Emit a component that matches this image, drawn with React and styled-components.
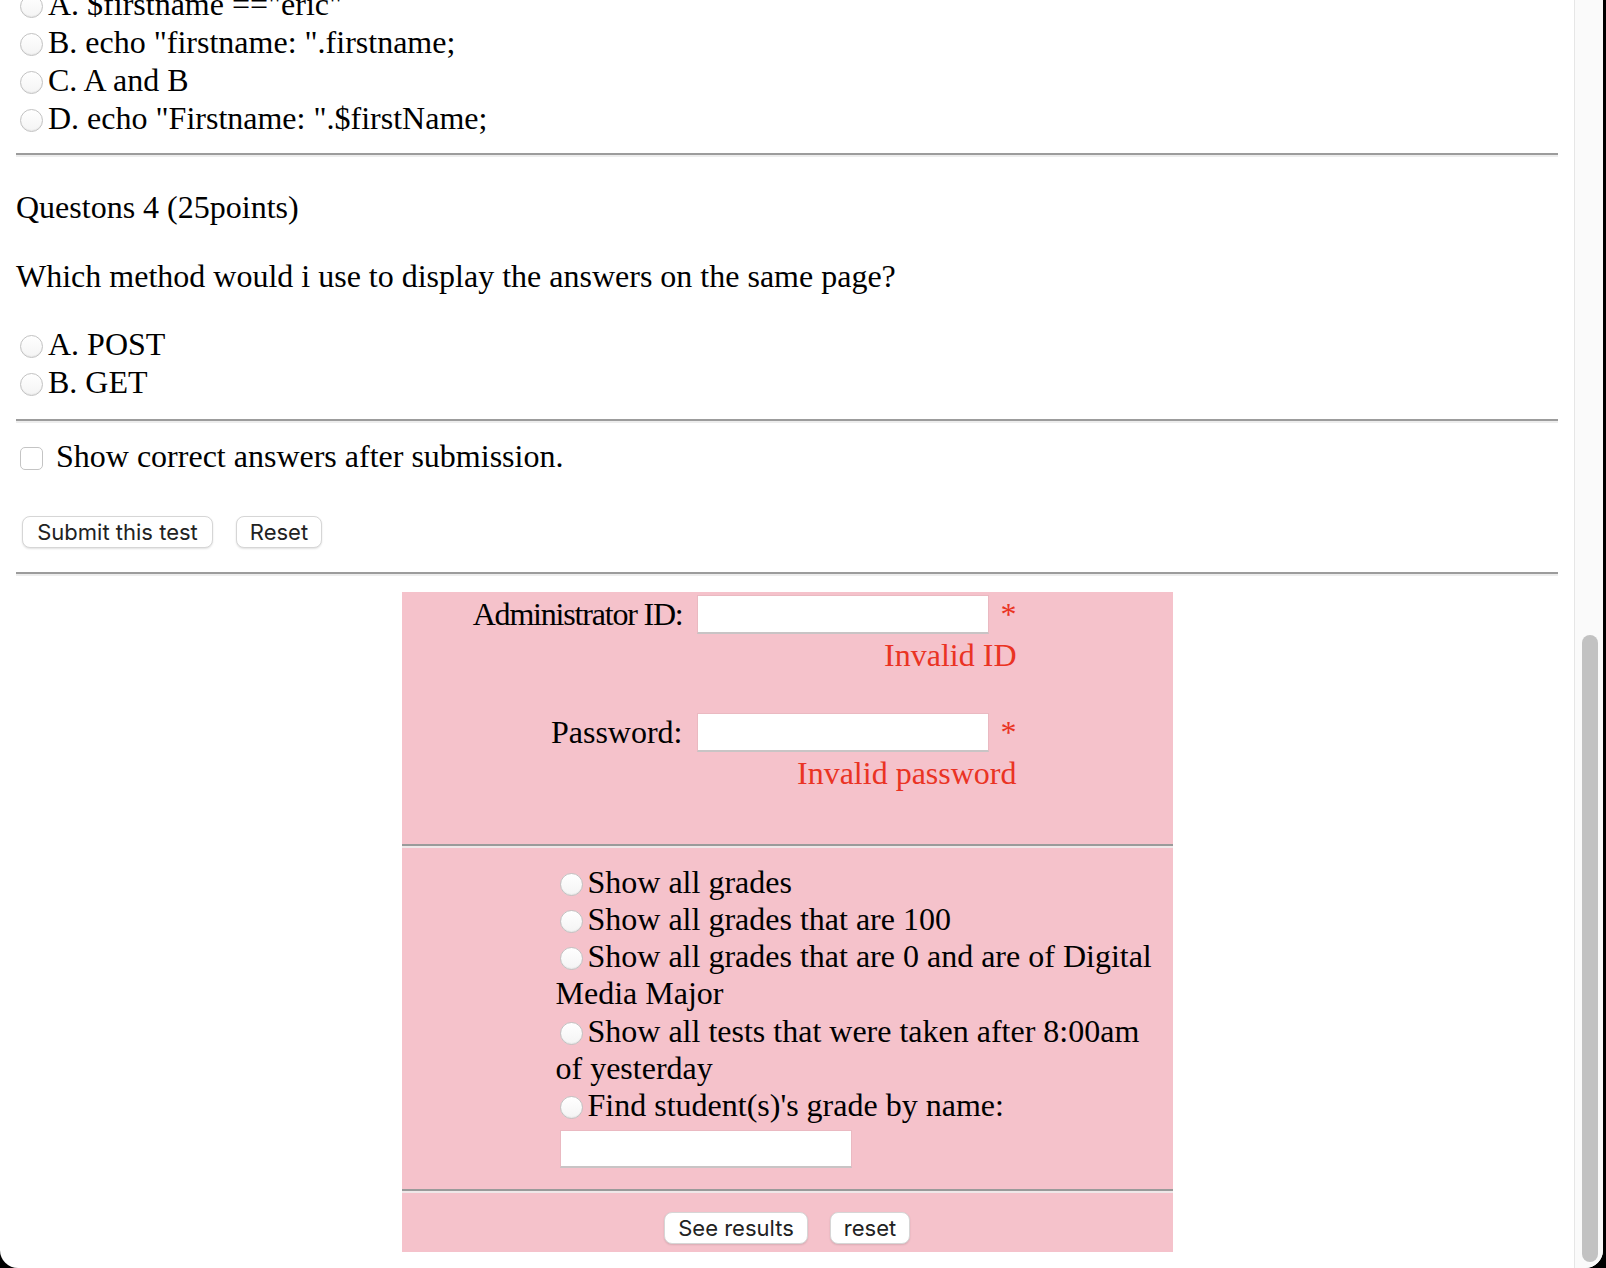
import React from "react";
import styled, { createGlobalStyle } from "styled-components";

const GlobalStyle = createGlobalStyle`
  html, body {
    margin: 0;
    padding: 0;
    background: #000;
  }
  body {
    font-family: "Liberation Serif", "Times New Roman", serif;
    font-size: 32px;
    color: #000;
  }
`;

const Window = styled.div`
  display: flex;
  width: 1603px;
  height: 1268px;
  background: #fff;
  border-radius: 0 0 18px 18px;
  overflow: hidden;
`;

const Viewport = styled.div`
  flex: 1;
  overflow: hidden;
`;

// the page is scrolled a little, so the first option sits under the top edge
const Page = styled.form`
  margin-top: -15px;
  padding: 0 16px;
`;

const OptionList = styled.div`
  margin-top: ${(p) => p.$top || 0}px;
  line-height: ${(p) => p.$lh}px;
`;

const Option = styled.label`
  display: block;
`;

const Radio = styled.input.attrs({ type: "radio" })`
  appearance: none;
  box-sizing: border-box;
  width: 23px;
  height: 23px;
  margin: 0 5px 0 4px;
  border: 1px solid #c2c2c2;
  border-radius: 50%;
  background: linear-gradient(#ffffff, #f4f4f4);
  box-shadow: inset 0 -1px 1px rgba(0, 0, 0, 0.05);
  vertical-align: -3px;
`;

const Checkbox = styled.input.attrs({ type: "checkbox" })`
  appearance: none;
  box-sizing: border-box;
  width: 23px;
  height: 23px;
  margin: 0 5px 0 4px;
  border: 1px solid #c4c4c4;
  border-radius: 5px;
  background: #fff;
  vertical-align: -3px;
`;

const Rule = styled.hr`
  height: 0;
  margin: ${(p) => p.$top}px 0 0;
  border: 0;
  border-top: 2px solid #9c9c9c;
  border-bottom: 2px solid #ededed;
`;

const Para = styled.p`
  margin: ${(p) => p.$top}px 0 0;
  line-height: 36.8px;
`;

const CheckLine = styled.label`
  display: block;
  margin-top: 15px;
  line-height: 37px;
`;

const ButtonRow = styled.div`
  display: flex;
  gap: 23px;
  margin-top: 41px;
  padding-left: 6px;
`;

const Button = styled.button`
  box-sizing: border-box;
  width: ${(p) => p.$w}px;
  height: 32px;
  padding: 0;
  font-family: Inter, "Liberation Sans", sans-serif;
  font-size: 22px;
  color: #222;
  background: #fff;
  border: 1px solid #d6d6d6;
  border-radius: 8px;
  box-shadow: 0 1px 2px rgba(0, 0, 0, 0.12);
`;

const AdminPanel = styled.div`
  width: 50%;
  margin: 16px auto 0;
  background: #f5c2cb;
`;

const FieldGrid = styled.div`
  display: grid;
  grid-template-columns: 281px 320px;
  column-gap: 14px;
  row-gap: 39px;
  padding-top: 3px;
`;

const FieldLabel = styled.label`
  text-align: right;
  line-height: 39px;
  letter-spacing: ${(p) => p.$spacing || 0}px;
`;

const InputRow = styled.div`
  display: flex;
  align-items: center;
`;

const TextInput = styled.input`
  display: block;
  box-sizing: border-box;
  width: 292px;
  height: ${(p) => p.$h || 39}px;
  margin: ${(p) => p.$margin || 0};
  padding: 0 6px;
  font: inherit;
  background: #fff;
  border: 1px solid #eab9c1;
  border-bottom: 2px solid #c8c4c5;
  border-radius: 0;
  outline: none;
`;

const Required = styled.span`
  width: 16px;
  margin-left: 12px;
  color: #ea3323;
  line-height: 39px;
`;

const ErrorText = styled.div`
  margin-top: 3px;
  line-height: 37px;
  color: #ea3323;
  text-align: right;
`;

const PanelRule = styled.hr`
  height: 0;
  margin: ${(p) => p.$top}px 0 0;
  border: 0;
  border-top: 2px solid #9a9a9a;
  border-bottom: 2px solid #efe7e8;
`;

const RadioSection = styled.div`
  padding: 16px 8px 0 154px;
  line-height: 37.3px;
`;

const PanelButtons = styled.div`
  display: flex;
  justify-content: center;
  gap: 22px;
  padding: 19px 0 8px;
`;

const ScrollTrack = styled.div`
  flex: none;
  box-sizing: border-box;
  width: 29px;
  display: flex;
  flex-direction: column;
  justify-content: flex-end;
  padding: 0 5px 6px 7px;
  background: #fafafa;
  border-left: 1px solid #e6e6e6;
`;

const ScrollThumb = styled.div`
  height: 627px;
  background: #c2c2c2;
  border-radius: 8px;
`;

const questionThree = [
  'A. $firstname =="eric"',
  'B. echo "firstname: ".firstname;',
  "C. A and B",
  'D. echo "Firstname: ".$firstName;',
];

const questionFour = ["A. POST", "B. GET"];

const reports = [
  "Show all grades",
  "Show all grades that are 100",
  "Show all grades that are 0 and are of Digital Media Major",
  "Show all tests that were taken after 8:00am of yesterday",
  "Find student(s)'s grade by name:",
];

export default function App() {
  return (
    <>
      <GlobalStyle />
      <Window>
        <Viewport>
          <Page onSubmit={(e) => e.preventDefault()}>
            <OptionList $lh={38}>
              {questionThree.map((text) => (
                <Option key={text}>
                  <Radio name="q3" />
                  {text}
                </Option>
              ))}
            </OptionList>
            <Rule $top={16} />

            <Para $top={32}>Questons 4 (25points)</Para>
            <Para $top={32}>
              Which method would i use to display the answers on the same page?
            </Para>
            <OptionList $lh={38} $top={30}>
              {questionFour.map((text) => (
                <Option key={text}>
                  <Radio name="q4" />
                  {text}
                </Option>
              ))}
            </OptionList>
            <Rule $top={18} />

            <CheckLine>
              <Checkbox /> Show correct answers after submission.
            </CheckLine>
            <ButtonRow>
              <Button type="submit" $w={191}>
                Submit this test
              </Button>
              <Button type="reset" $w={86}>
                Reset
              </Button>
            </ButtonRow>
            <Rule $top={24} />

            <AdminPanel>
              <FieldGrid>
                <FieldLabel $spacing={-1.2}>Administrator ID:</FieldLabel>
                <div>
                  <InputRow>
                    <TextInput type="text" />
                    <Required>*</Required>
                  </InputRow>
                  <ErrorText>Invalid ID</ErrorText>
                </div>
                <FieldLabel>Password:</FieldLabel>
                <div>
                  <InputRow>
                    <TextInput type="password" />
                    <Required>*</Required>
                  </InputRow>
                  <ErrorText>Invalid password</ErrorText>
                </div>
              </FieldGrid>
              <PanelRule $top={52} />

              <RadioSection>
                {reports.map((text) => (
                  <Option key={text}>
                    <Radio name="report" />
                    {text}
                  </Option>
                ))}
                <TextInput type="text" $h={38} $margin="5px 0 0 4px" />
              </RadioSection>
              <PanelRule $top={21} />

              <PanelButtons>
                <Button type="button" $w={144}>
                  See results
                </Button>
                <Button type="button" $w={80}>
                  reset
                </Button>
              </PanelButtons>
            </AdminPanel>
          </Page>
        </Viewport>
        <ScrollTrack>
          <ScrollThumb />
        </ScrollTrack>
      </Window>
    </>
  );
}
